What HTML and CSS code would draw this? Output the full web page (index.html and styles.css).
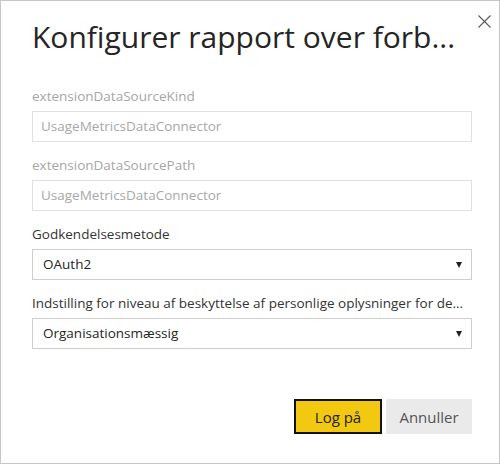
FILE: index.html
```html
<!DOCTYPE html>
<html lang="da">
<head>
<meta charset="utf-8">
<link rel="stylesheet" href="styles.css">
</head>
<body>
<div class="dialog">
  <button class="close" aria-label="Luk">
    <svg width="13" height="13" viewBox="0 0 13 13"><path d="M0.5 0.5 L12.5 12.5 M12.5 0.5 L0.5 12.5" stroke="#5a5a5a" stroke-width="1.1" fill="none"/></svg>
  </button>
  <h1 class="title">Konfigurer rapport over forb...</h1>
  <div class="fields">
    <div class="field">
      <div class="label disabled">extensionDataSourceKind</div>
      <div class="input disabled">UsageMetricsDataConnector</div>
    </div>
    <div class="field">
      <div class="label disabled">extensionDataSourcePath</div>
      <div class="input disabled">UsageMetricsDataConnector</div>
    </div>
    <div class="field">
      <div class="label">Godkendelsesmetode</div>
      <div class="input select"><span>OAuth2</span><span class="arrow"></span></div>
    </div>
    <div class="field">
      <div class="label">Indstilling for niveau af beskyttelse af personlige oplysninger for de...</div>
      <div class="input select"><span>Organisationsmæssig</span><span class="arrow"></span></div>
    </div>
  </div>
  <div class="buttons">
    <button class="btn primary">Log på</button>
    <button class="btn secondary">Annuller</button>
  </div>
</div>
</body>
</html>
```
FILE: styles.css
```css
* { box-sizing: border-box; }
html, body { margin: 0; padding: 0; background: #fff; }
body { font-family: "Open Sans", "Noto Sans", sans-serif; color: #252525; }
.dialog {
  position: relative;
  width: 500px;
  height: 464px;
  border: 1px solid #c6c6c6;
  padding: 16px 27px 0 31px;
  background: #fff;
}
.close {
  position: absolute;
  top: 14px;
  right: 8px;
  border: 0;
  background: transparent;
  padding: 0;
  width: 13px;
  height: 13px;
  display: block;
}
.close svg { display: block; }
.title {
  margin: 0;
  font-weight: 400;
  font-size: 30px;
  line-height: 40px;
  color: #252525;
  white-space: nowrap;
}
.fields {
  margin-top: 29px;
  display: flex;
  flex-direction: column;
  gap: 13px;
}
.field { display: flex; flex-direction: column; gap: 5px; }
.label {
  font-size: 13.5px;
  line-height: 20px;
  color: #333;
  white-space: nowrap;
}
.label.disabled { color: #a6a6a6; }
.input {
  height: 31px;
  border: 1px solid #cfcfcf;
  padding: 0 9px;
  font-size: 13.5px;
  line-height: 29px;
  color: #252525;
  display: flex;
  align-items: center;
}
.input.disabled { border-color: #e0e0e0; color: #a8a8a8; padding-left: 8px; }
.select { justify-content: space-between; padding-right: 9px; padding-left: 10px; }
.arrow {
  width: 0; height: 0;
  border-left: 3.5px solid transparent;
  border-right: 3.5px solid transparent;
  border-top: 6px solid #222;
}
.buttons {
  margin-top: 50px;
  display: flex;
  justify-content: flex-end;
  gap: 4px;
}
.btn {
  height: 35px;
  font-family: inherit;
  font-size: 15px;
  padding: 0;
}
.primary {
  width: 88px;
  background: #f2c811;
  border: 2px solid #111;
  color: #222;
  box-shadow: inset 0 0 0 1px #f2c811;
}
.secondary {
  width: 86px;
  background: #eaeaea;
  border: 1px solid #eaeaea;
  color: #555;
}
```
